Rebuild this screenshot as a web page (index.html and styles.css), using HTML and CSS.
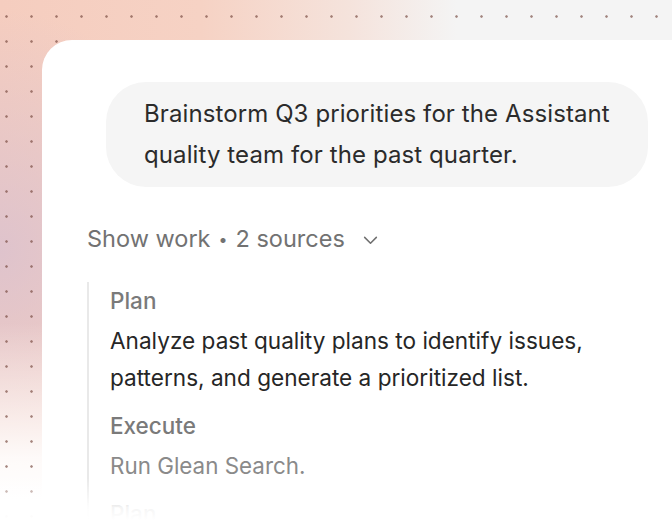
FILE: index.html
```html
<!DOCTYPE html>
<html lang="en">
<head>
<meta charset="utf-8">
<title>Show work</title>
<link rel="stylesheet" href="styles.css">
</head>
<body>
<div class="stage">
  <div class="card">
    <div class="bubble">
      <p>Brainstorm Q3 priorities for the Assistant quality team for the past quarter.</p>
    </div>
    <div class="work-toggle">
      <span>Show work</span><span class="dot">•</span><span>2 sources</span>
      <svg class="chev" width="16" height="10" viewBox="0 0 16 10" aria-hidden="true"><path d="M1.5 1.5 L8 8 L14.5 1.5" fill="none" stroke="#707070" stroke-width="1.7" stroke-linecap="round" stroke-linejoin="round"/></svg>
    </div>
    <div class="steps">
      <div class="label">Plan</div>
      <p class="body">Analyze past quality plans to identify issues, patterns, and generate a prioritized list.</p>
      <div class="label">Execute</div>
      <p class="body muted">Run Glean Search.</p>
      <div class="label">Plan</div>
    </div>
  </div>
  <div class="fade"></div>
</div>
</body>
</html>
```
FILE: styles.css
```css
html, body {
  margin: 0;
  padding: 0;
  background: #fff;
}
body {
  font-family: Inter, "Noto Sans", "Liberation Sans", sans-serif;
}
.stage {
  position: relative;
  width: 672px;
  height: 520px;
  overflow: hidden;
  box-sizing: border-box;
  padding: 40px 0 0 42px;
  background-color: #f4f4f4;
  background-image:
    radial-gradient(circle, rgba(112, 66, 56, 0.62) 0.9px, rgba(112, 66, 56, 0) 1.6px),
    linear-gradient(to bottom, rgba(255,255,255,0) 0%, rgba(255,255,255,0) 62%, rgba(255,255,255,0.9) 88%, #fff 96%),
    radial-gradient(ellipse 200px 240px at 0px 250px, rgba(220, 194, 206, 0.9) 0%, rgba(220, 194, 206, 0) 100%),
    linear-gradient(to right, #f5cdbf 0%, #f6d2c4 30%, #f5e3dc 52%, #f4f4f4 68%);
  background-size: 25px 25px, 100% 100%, 100% 100%, 100% 100%;
  background-position: -6px 4px, 0 0, 0 0, 0 0;
  background-repeat: repeat, no-repeat, no-repeat, no-repeat;
}
.card {
  height: 100%;
  background: #fff;
  border-top-left-radius: 30px;
  box-sizing: border-box;
  padding: 42px 0 0 45px;
}
.bubble {
  margin-left: 19px;
  width: 542px;
  box-sizing: border-box;
  background: #f5f5f5;
  border-radius: 40px;
  padding: 11px 20px 12px 38px;
}
.bubble p {
  margin: 0;
  font-size: 24px;
  line-height: 41px;
  color: #2b2b2b;
  letter-spacing: 0.1px;
}
.work-toggle {
  margin-top: 37px;
  display: flex;
  align-items: center;
  gap: 8px;
  font-size: 23.5px;
  line-height: 30px;
  color: #727272;
}
.work-toggle .dot {
  font-size: 16px;
}
.chev {
  margin-left: 10px;
  margin-top: 2px;
  width: 15px;
  height: 9px;
}
.steps {
  margin-top: 28px;
  border-left: 2px solid #e9e9e9;
  padding: 4px 0 0 21px;
}
.label {
  font-size: 22.5px;
  line-height: 30px;
  font-weight: 500;
  color: #7a7a7a;
  margin-bottom: 6px;
}
.body {
  margin: 0 0 15px;
  font-size: 22.6px;
  line-height: 37px;
  color: #262626;
  max-width: 520px;
}
.muted {
  font-size: 22.4px;
  color: #8a8a8a;
}
.fade {
  position: absolute;
  left: 0;
  right: 0;
  bottom: 0;
  height: 42px;
  background: linear-gradient(to bottom, rgba(255,255,255,0), rgba(255,255,255,0.92) 70%, #fff);
  pointer-events: none;
}
```
